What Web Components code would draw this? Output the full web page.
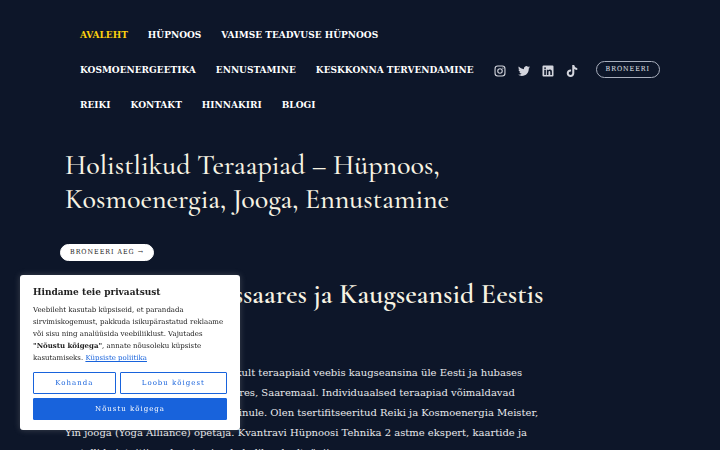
<!DOCTYPE html>
<html lang="et">
<head>
<meta charset="utf-8">
<meta name="viewport" content="width=device-width, initial-scale=1">
<title>Holistlikud Teraapiad</title>
<style>
  body {
    margin: 0;
    background: #0d1629;
    color: #fff;
    font: 10px/20px "DejaVu Serif", serif;
    overflow-x: hidden;
  }
</style>
</head>
<body>
<site-header>
  <nav-link href="#avaleht" current>Avaleht</nav-link>
  <nav-link href="#hupnoos">Hüpnoos</nav-link>
  <nav-link href="#vaimne">Vaimse teadvuse hüpnoos</nav-link>
  <nav-link href="#kosmoenergeetika">Kosmoenergeetika</nav-link>
  <nav-link href="#ennustamine">Ennustamine</nav-link>
  <nav-link href="#keskkond">Keskkonna tervendamine</nav-link>
  <nav-link href="#reiki">Reiki</nav-link>
  <nav-link href="#kontakt">Kontakt</nav-link>
  <nav-link href="#hinnakiri">Hinnakiri</nav-link>
  <nav-link href="#blogi">Blogi</nav-link>
  <social-links slot="actions"></social-links>
  <pill-link slot="actions" href="#broneeri" outline>Broneeri</pill-link>
</site-header>
<page-intro>
  <span slot="title">Holistlikud Teraapiad – Hüpnoos, Kosmoenergia, Jooga, Ennustamine</span>
  <pill-link slot="action" href="#broneeri">Broneeri aeg →</pill-link>
  <span slot="subtitle">Teraapiad Kuressaares ja Kaugseansid Eestis</span>
  Pakun kõigile südamlikult ja isiklikult teraapiaid veebis kaugseansina üle Eesti ja hubases minu vastuvõtukabinetis Kuressaares, Saaremaal. Individuaalsed teraapiad võimaldavad läheneda teraapias isiklikult just sinule. Olen tsertifitseeritud Reiki ja Kosmoenergia Meister, Yin jooga (Yoga Alliance) õpetaja. Kvantravi Hüpnoosi Tehnika 2 astme ekspert, kaartide ja metallide intuitiivne lugeja ning kohalik selgeltnägija.
</page-intro>
<cookie-banner>
  <span slot="title">Hindame teie privaatsust</span>
  Veebileht kasutab küpsiseid, et parandada sirvimiskogemust, pakkuda isikupärastatud reklaame või sisu ning analüüsida veebiliiklust. Vajutades <b>"Nõustu kõigega"</b>, annate nõusoleku küpsiste kasutamiseks.
</cookie-banner>

<script>
// Small helper: open a shadow root and fill it from a template
function mount(host, html) {
  const template = document.createElement('template');
  template.innerHTML = html;
  host.attachShadow({ mode: 'open' }).appendChild(template.content.cloneNode(true));
}

class SiteHeader extends HTMLElement {
  constructor() {
    super();
    mount(this, `
<style>
:host {
  display: flex;
  align-items: center;
  padding: 17px 60px 18px 70px;
}
nav {
  flex: 1;
  display: flex;
  flex-wrap: wrap;
}
.actions {
  display: flex;
  align-items: center;
  gap: 18px;
}
</style>
<nav><slot></slot></nav>
<div class="actions"><slot name="actions"></slot></div>`);
  }
}

class NavLink extends HTMLElement {
  constructor() {
    super();
    mount(this, `
<style>
:host { display: block; }
a {
  display: block;
  padding: 0 10px;
  color: #fff;
  font: bold 10px/35px "DejaVu Serif Condensed", "DejaVu Serif", serif;
  text-decoration: none;
  text-transform: uppercase;
  white-space: nowrap;
}
:host([current]) a { color: #fbd00e; }
</style>
<a><slot></slot></a>`);
    this.shadowRoot.querySelector('a').href = this.getAttribute('href');
  }
}

class SocialLinks extends HTMLElement {
  constructor() {
    super();
    mount(this, `
<style>
:host {
  display: flex;
  gap: 12px;
  padding-top: 2px;
}
a {
  display: block;
  height: 12px;
  color: #d3d5dd;
}
svg {
  display: block;
  width: 12px;
  height: 12px;
  fill: currentColor;
}
</style>
<a href="#instagram" aria-label="Instagram"><svg viewBox="0 0 24 24"><path fill-rule="evenodd" d="M7.500 1h9a6.500 6.500 0 0 1 6.500 6.500v9a6.500 6.500 0 0 1-6.500 6.500h-9a6.500 6.500 0 0 1-6.500-6.500v-9a6.500 6.500 0 0 1 6.500-6.500zm0 2.200a4.300 4.300 0 0 0-4.300 4.300v9a4.300 4.300 0 0 0 4.300 4.300h9a4.300 4.300 0 0 0 4.300-4.300v-9a4.300 4.300 0 0 0-4.300-4.300zM12 6.400a5.600 5.600 0 1 1 0 11.200 5.600 5.600 0 0 1 0-11.200zm0 2.200a3.400 3.400 0 1 0 0 6.800 3.400 3.400 0 0 0 0-6.800z"/><circle cx="17.800" cy="6.200" r="1.400"/></svg></a>
<a href="#twitter" aria-label="Twitter"><svg viewBox="0 0 24 24"><path d="M23.950 4.570a10 10 0 0 1-2.820.780 4.960 4.960 0 0 0 2.160-2.720c-.950.550-2 .950-3.130 1.180a4.920 4.920 0 0 0-8.380 4.480C7.690 8.090 4.070 6.130 1.640 3.160a4.820 4.820 0 0 0-.670 2.480c0 1.710.870 3.210 2.190 4.090a4.900 4.900 0 0 1-2.230-.610v.060a4.920 4.920 0 0 0 3.950 4.830 5 5 0 0 1-2.210.080 4.940 4.940 0 0 0 4.600 3.420A9.870 9.870 0 0 1 0 19.540a14 14 0 0 0 7.560 2.210c9.050 0 14-7.500 14-13.980 0-.210 0-.420-.020-.630a9.900 9.900 0 0 0 2.410-2.570z"/></svg></a>
<a href="#linkedin" aria-label="LinkedIn"><svg viewBox="0 0 24 24"><path fill-rule="evenodd" d="M3 1h18a2 2 0 0 1 2 2v18a2 2 0 0 1-2 2H3a2 2 0 0 1-2-2V3a2 2 0 0 1 2-2zm1.500 8.500v10.300h3.200V9.500zM6.100 4.300a1.900 1.900 0 1 0 0 3.800 1.900 1.900 0 0 0 0-3.800zM9.700 9.500v10.300h3.200v-5.100c0-1.400.300-2.700 2-2.700s1.700 1.600 1.700 2.800v5h3.200v-5.700c0-2.800-.600-4.900-3.800-4.900-1.600 0-2.600.900-3.100 1.700V9.500z"/></svg></a>
<a href="#tiktok" aria-label="TikTok"><svg viewBox="0 0 24 24"><path d="M12.500 0h4c.200 3.200 2.400 5.700 6 6v4.100c-2.200 0-4.200-.700-5.900-1.900v8.100c0 4.400-3.200 7.700-7.400 7.700S1.500 20.700 1.500 16.500c0-4.500 3.800-8 8.700-7.500v4.200c-2.500-.600-4.600 1-4.600 3.300 0 2 1.500 3.500 3.500 3.500s3.400-1.500 3.400-3.800z"/></svg></a>`);
  }
}

class PillLink extends HTMLElement {
  constructor() {
    super();
    mount(this, `
<style>
:host { display: inline-block; }
a {
  display: block;
  padding: 0 9px;
  border: 1px solid #fff;
  border-radius: 9px;
  background: #fff;
  color: #222;
  font: 7px/15px "DejaVu Serif Condensed", "DejaVu Serif", serif;
  letter-spacing: 1px;
  text-decoration: none;
  text-transform: uppercase;
  white-space: nowrap;
}
:host([outline]) a {
  border-color: #a9afbd;
  background: none;
  color: #e4e6ec;
}
</style>
<a><slot></slot></a>`);
    this.shadowRoot.querySelector('a').href = this.getAttribute('href');
  }
}

class PageIntro extends HTMLElement {
  constructor() {
    super();
    mount(this, `
<style>
:host {
  display: block;
  max-width: 480px;
  padding: 8px 65px 60px;
}
h1, h2 {
  margin: 0;
  color: #f7f3e3;
  font: 500 28px/34px "Cormorant Garamond", "Liberation Serif", serif;
}
h1 { max-width: 400px; }
h2 { font-weight: 600; }
.action {
  margin: 25px 0 16px -5px;
}
p {
  margin: 52px 0 0;
  color: #e8e9ec;
  font-size: 10px;
}
</style>
<h1><slot name="title"></slot></h1>
<div class="action"><slot name="action"></slot></div>
<h2><slot name="subtitle"></slot></h2>
<p><slot></slot></p>`);
  }
}

class CookieBanner extends HTMLElement {
  constructor() {
    super();
    mount(this, `
<style>
:host {
  position: fixed;
  left: 20px;
  bottom: 20px;
  box-sizing: border-box;
  width: 220px;
  padding: 11px 13px 10px;
  border-radius: 3px;
  background: #fff;
  color: #212121;
  box-shadow: 0 0 6px rgba(172, 171, 171, .3);
}
:host([hidden]) { display: none; }
h3 {
  margin: 0 0 6px;
  font-size: 9px;
  line-height: 12px;
}
p {
  margin: 0 0 8px;
  font: 7px/12px "DejaVu Serif", serif;
}
a { color: #1863dc; }
.buttons {
  display: flex;
  flex-wrap: wrap;
  gap: 4px;
}
button {
  flex: 1 1 auto;
  height: 22px;
  padding: 0 20px;
  border: 1px solid #1863dc;
  border-radius: 1px;
  background: #fff;
  color: #1863dc;
  font: 7px/20px "DejaVu Serif", serif;
  letter-spacing: 1px;
  cursor: pointer;
}
.accept {
  flex-basis: 100%;
  background: #1863dc;
  color: #fff;
}
</style>
<h3><slot name="title"></slot></h3>
<p><slot></slot> <a href="#kupsised">Küpsiste poliitika</a></p>
<div class="buttons">
  <button type="button">Kohanda</button>
  <button type="button">Loobu kõigest</button>
  <button type="button" class="accept">Nõustu kõigega</button>
</div>`);

    for (const button of this.shadowRoot.querySelectorAll('button')) {
      button.addEventListener('click', () => { this.hidden = true; });
    }
  }
}

customElements.define('site-header', SiteHeader);
customElements.define('nav-link', NavLink);
customElements.define('social-links', SocialLinks);
customElements.define('pill-link', PillLink);
customElements.define('page-intro', PageIntro);
customElements.define('cookie-banner', CookieBanner);
</script>
</body>
</html>
